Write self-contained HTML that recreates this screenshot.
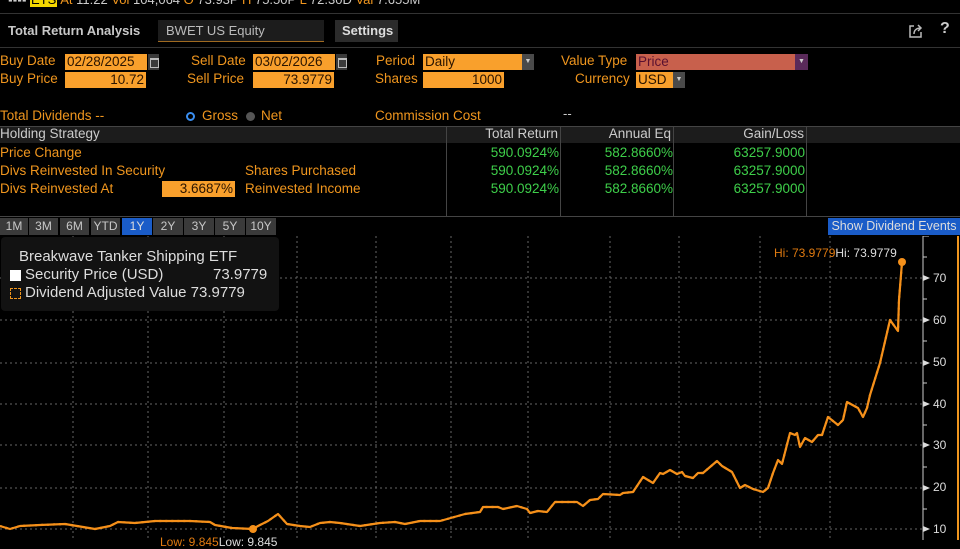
<!DOCTYPE html>
<html><head><meta charset="utf-8"><style>
*{margin:0;padding:0;box-sizing:border-box}
body{width:960px;height:540px;background:#000;overflow:hidden;position:relative;font-family:"Liberation Sans",sans-serif;font-size:13px;color:#f39a1e}
.a{position:absolute;white-space:nowrap}
.lab{color:#f0961e;font-size:13.5px}
.in{position:absolute;background:#f9a02c;color:#2a1400;font-size:13.5px;height:16px;line-height:16px;padding:0 2px}
.r{text-align:right}
.dd{position:absolute;background:#4a4a4a;height:16px;width:12px;color:#ccc;font-size:7px;text-align:center;line-height:16px}
.cal{position:absolute;background:#3a3a3a;width:11px;height:16px}
.cal:after{content:"";position:absolute;left:2px;top:4px;width:7px;height:7px;border:1px solid #bbb;border-top-width:2px}
.g{color:#3ecf4a;font-size:13.5px;text-align:right;position:absolute}
.tab{position:absolute;top:218px;height:17px;background:#3a3a3a;color:#c8c8c8;font-size:12px;line-height:17px;text-align:center}
.ax{position:absolute;left:933px;color:#ddd;font-size:12px}
</style></head><body>
<div class="a" style="top:-8px;left:8px;color:#ccc;font-size:13px;">▪▪▪▪ <span style="background:#f5d800;color:#000;padding:0 1px">ETS</span> <span style="color:#f0961e">At</span> 11:22 <span style="color:#f0961e">Vol</span> 104,064 <span style="color:#f0961e">O</span> 73.93P <span style="color:#f0961e">H</span> 75.50P <span style="color:#f0961e">L</span> 72.30D <span style="color:#f0961e">Val</span> 7.655M</div>
<div class="a" style="top:13px;left:0;width:960px;height:1px;background:#333"></div>
<div class="a" style="top:23px;left:8px;color:#c8c8c8;font-size:13px;font-weight:bold">Total Return Analysis</div>
<div class="a" style="top:20px;left:158px;width:166px;height:22px;background:#1c1c1c;border-bottom:1px solid #a06a20;color:#bbb;font-size:13px;padding:3px 8px">BWET US Equity</div>
<div class="a" style="top:20px;left:335px;width:63px;height:22px;background:#2b2b2b;color:#ddd;font-size:13px;font-weight:bold;padding:3px 7px">Settings</div>
<svg class="a" style="left:909px;top:24px" width="14" height="14" viewBox="0 0 14 14"><path d="M5 2H1v11h11V8" fill="none" stroke="#bbb" stroke-width="1.5"/><path d="M5 10c0-4 3-6 7-6M9 1l3 3-3 3" fill="none" stroke="#bbb" stroke-width="1.5"/></svg>
<div class="a" style="left:940px;top:20px;color:#ccc;font-size:16px;font-weight:bold">?</div>
<div class="a" style="top:47px;left:0;width:960px;height:1px;background:#333"></div>

<div class="a lab" style="left:0;top:53px">Buy Date</div>
<div class="in" style="left:65px;top:54px;width:82px">02/28/2025</div><div class="cal" style="left:148px;top:54px"></div>
<div class="a lab" style="left:191px;top:53px">Sell Date</div>
<div class="in" style="left:253px;top:54px;width:82px">03/02/2026</div><div class="cal" style="left:336px;top:54px"></div>
<div class="a lab" style="left:376px;top:53px">Period</div>
<div class="in" style="left:423px;top:54px;width:99px">Daily</div><div class="dd" style="left:522px;top:54px">▼</div>
<div class="a lab" style="left:561px;top:53px">Value Type</div>
<div class="in" style="left:636px;top:54px;width:159px;background:#c8604c;color:#5a1030">Price</div><div class="dd" style="left:795px;top:54px;width:13px;background:#5a2a5a">▼</div>

<div class="a lab" style="left:0;top:71px">Buy Price</div>
<div class="in r" style="left:65px;top:72px;width:81px">10.72</div>
<div class="a lab" style="left:187px;top:71px">Sell Price</div>
<div class="in r" style="left:253px;top:72px;width:81px">73.9779</div>
<div class="a lab" style="left:375px;top:71px">Shares</div>
<div class="in r" style="left:423px;top:72px;width:81px">1000</div>
<div class="a lab" style="left:575px;top:71px">Currency</div>
<div class="in" style="left:636px;top:72px;width:37px">USD</div><div class="dd" style="left:673px;top:72px">▼</div>

<div class="a lab" style="left:0;top:108px">Total Dividends --</div>
<div class="a" style="left:186px;top:112px;width:9px;height:9px;border-radius:50%;border:2px solid #3a8ef0"></div>
<div class="a lab" style="left:202px;top:108px">Gross</div>
<div class="a" style="left:246px;top:112px;width:9px;height:9px;border-radius:50%;background:#555"></div>
<div class="a lab" style="left:261px;top:108px">Net</div>
<div class="a lab" style="left:375px;top:108px">Commission Cost</div>
<div class="a" style="left:563px;top:106px;color:#ccc">--</div>

<div class="a" style="top:126px;left:0;width:960px;height:17px;background:#1c1c1c;border-top:1px solid #444"></div>
<div class="a" style="top:126px;left:0;color:#ccc;font-size:13.5px">Holding Strategy</div>
<div class="a r" style="top:126px;left:446px;width:112px;color:#ccc;font-size:13.5px">Total Return</div>
<div class="a r" style="top:126px;left:560px;width:111px;color:#ccc;font-size:13.5px">Annual Eq</div>
<div class="a r" style="top:126px;left:673px;width:131px;color:#ccc;font-size:13.5px">Gain/Loss</div>
<div class="a" style="left:446px;top:126px;width:1px;height:91px;background:#444"></div>
<div class="a" style="left:560px;top:126px;width:1px;height:91px;background:#444"></div>
<div class="a" style="left:673px;top:126px;width:1px;height:91px;background:#444"></div>
<div class="a" style="left:806px;top:126px;width:1px;height:91px;background:#444"></div>
<div class="a" style="left:0;top:216px;width:960px;height:1px;background:#444"></div>

<div class="a lab" style="left:0;top:145px">Price Change</div>
<div class="a lab" style="left:0;top:163px">Divs Reinvested In Security</div>
<div class="a lab" style="left:245px;top:163px">Shares Purchased</div>
<div class="a lab" style="left:0;top:181px">Divs Reinvested At</div>
<div class="in r" style="left:162px;top:181px;width:73px">3.6687%</div>
<div class="a lab" style="left:245px;top:181px">Reinvested Income</div>
<div class="g" style="left:446px;top:145px;width:113px">590.0924%</div>
<div class="g" style="left:560px;top:145px;width:113px">582.8660%</div>
<div class="g" style="left:673px;top:145px;width:132px">63257.9000</div>
<div class="g" style="left:446px;top:163px;width:113px">590.0924%</div>
<div class="g" style="left:560px;top:163px;width:113px">582.8660%</div>
<div class="g" style="left:673px;top:163px;width:132px">63257.9000</div>
<div class="g" style="left:446px;top:181px;width:113px">590.0924%</div>
<div class="g" style="left:560px;top:181px;width:113px">582.8660%</div>
<div class="g" style="left:673px;top:181px;width:132px">63257.9000</div>

<div class="tab" style="left:0;width:28px">1M</div>
<div class="tab" style="left:29px;width:29px">3M</div>
<div class="tab" style="left:60px;width:29px">6M</div>
<div class="tab" style="left:91px;width:29px">YTD</div>
<div class="tab" style="left:122px;width:30px;background:#1a5cc8;color:#ddd">1Y</div>
<div class="tab" style="left:153px;width:30px">2Y</div>
<div class="tab" style="left:184px;width:30px">3Y</div>
<div class="tab" style="left:215px;width:30px">5Y</div>
<div class="tab" style="left:246px;width:30px">10Y</div>
<div class="tab" style="left:828px;width:132px;background:#1a5cc8;color:#ddd;font-size:12.5px">Show Dividend Events</div>

<svg class="a" style="left:0;top:236px" width="960" height="304">
<g stroke="#666" stroke-width="1" stroke-dasharray="2,3">
<line x1="73" y1="0" x2="73" y2="304"/><line x1="148" y1="0" x2="148" y2="304"/><line x1="224" y1="0" x2="224" y2="304"/><line x1="297" y1="0" x2="297" y2="304"/><line x1="376" y1="0" x2="376" y2="304"/><line x1="451" y1="0" x2="451" y2="304"/><line x1="528" y1="0" x2="528" y2="304"/><line x1="610" y1="0" x2="610" y2="304"/><line x1="679" y1="0" x2="679" y2="304"/><line x1="760" y1="0" x2="760" y2="304"/><line x1="830" y1="0" x2="830" y2="304"/>
<line x1="0" y1="42" x2="922" y2="42"/><line x1="0" y1="84" x2="922" y2="84"/><line x1="0" y1="127" x2="922" y2="127"/><line x1="0" y1="168" x2="922" y2="168"/><line x1="0" y1="209" x2="922" y2="209"/><line x1="0" y1="252" x2="922" y2="252"/><line x1="0" y1="293" x2="922" y2="293"/>
</g>
<line x1="923" y1="0" x2="923" y2="304" stroke="#ccc"/>
<line x1="958" y1="0" x2="958" y2="304" stroke="#f0961e" stroke-width="2"/>
<g stroke="#ccc"><line x1="923" y1="0" x2="929" y2="0"/><line x1="923" y1="21" x2="927" y2="21"/><line x1="923" y1="63" x2="927" y2="63"/><line x1="923" y1="105" x2="927" y2="105"/><line x1="923" y1="147" x2="927" y2="147"/><line x1="923" y1="189" x2="927" y2="189"/><line x1="923" y1="231" x2="927" y2="231"/><line x1="923" y1="273" x2="927" y2="273"/></g>
<g fill="#ddd"><path d="M923 39l7 3-7 3z"/><path d="M923 81l7 3-7 3z"/><path d="M923 124l7 3-7 3z"/><path d="M923 165l7 3-7 3z"/><path d="M923 206l7 3-7 3z"/><path d="M923 249l7 3-7 3z"/><path d="M923 290l7 3-7 3z"/></g>
<g transform="translate(0,-236)">
<polyline id="pl" fill="none" stroke="#f5901a" stroke-width="2.2" stroke-linejoin="round" points="0,526 10,529 20,526 40,525 65,524 95,529 110,526 118,522 135,523 155,521 190,521 210,522 215,525 232,528 253,529 258,526 268,521 278,514 287,524 300,526 310,527 320,523 330,522 340,523 360,526 380,523 395,522 405,524 420,521 440,521 465,514 480,512 483,507 498,507 503,509 517,506 527,509 530,513 538,511 547,512 555,502 577,502 583,506 590,500 598,499 603,494 620,495 623,493 633,492 643,477 653,483 660,473 663,474 670,470 677,474 682,472 685,476 693,478 698,473 703,473 717,461 722,466 732,472 740,488 745,485 753,489 763,492 768,488 773,473 778,460 782,464 790,433 795,435 797,433 800,447 805,438 812,442 818,435 822,435 828,417 838,425 843,420 847,402 858,408 863,417 867,408 870,395 880,363 890,320 898,331 899,300 902,262"/>
<use href="#pl" stroke="#fff" stroke-width="0.8" stroke-dasharray="2,4"/>
<circle cx="253" cy="529" r="4" fill="#f5901a"/>
<circle cx="902" cy="262" r="4" fill="#f5901a"/>
</g>
</svg>
<div class="ax" style="top:271px">70</div><div class="ax" style="top:313px">60</div><div class="ax" style="top:355px">50</div><div class="ax" style="top:397px">40</div><div class="ax" style="top:438px">30</div><div class="ax" style="top:480px">20</div><div class="ax" style="top:522px">10</div>
<div class="a" style="left:774px;top:246px;font-size:12px;color:#e07a10">Hi: 73.9779<span style="color:#ddd">Hi: 73.9779</span></div>
<div class="a" style="left:160px;top:535px;font-size:12px;color:#e07a10">Low: 9.845<span style="color:#ddd">Low: 9.845</span></div>

<div class="a" style="left:1px;top:237px;width:278px;height:74px;background:#121212;border-radius:4px"></div>
<div class="a" style="left:19px;top:248px;color:#ddd;font-size:15px">Breakwave Tanker Shipping ETF</div>
<div class="a" style="left:10px;top:270px;width:11px;height:11px;background:#fff"></div>
<div class="a" style="left:25px;top:266px;color:#ddd;font-size:15px">Security Price (USD)</div>
<div class="a" style="left:213px;top:266px;color:#ddd;font-size:15px">73.9779</div>
<div class="a" style="left:10px;top:288px;width:11px;height:11px;border:1px dashed #f0961e"></div>
<div class="a" style="left:25px;top:284px;color:#ddd;font-size:15px">Dividend Adjusted Value 73.9779</div>
</body></html>
